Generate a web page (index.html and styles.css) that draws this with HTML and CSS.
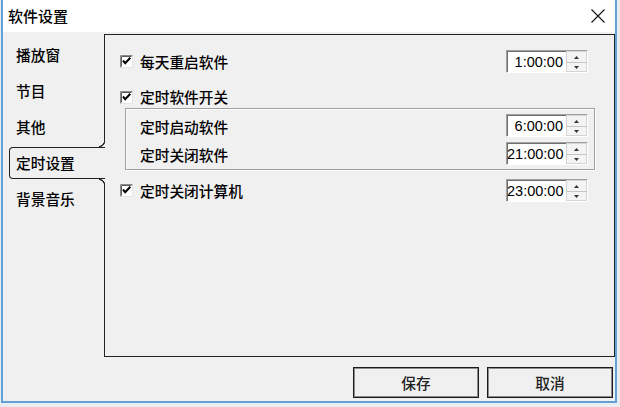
FILE: index.html
```html
<!DOCTYPE html>
<html lang="zh-CN">
<head>
<meta charset="utf-8">
<title>软件设置</title>
<link rel="stylesheet" href="styles.css">
</head>
<body>
<div class="window">
  <div class="titlebar">
    <span class="title">软件设置</span>
    <svg class="close" width="14" height="14" viewBox="0 0 14 14"><path d="M0.5 0.5L13.5 13.5M13.5 0.5L0.5 13.5" stroke="#111" stroke-width="1.1" fill="none"/></svg>
  </div>
  <div class="client">
    <div class="tabarea">
      <ul class="tabs">
        <li class="tab">播放窗</li>
        <li class="tab">节目</li>
        <li class="tab">其他</li>
        <li class="tab selected">定时设置</li>
        <li class="tab">背景音乐</li>
      </ul>
      <div class="panel">
        <div class="row">
          <label class="check">
            <svg class="cb" width="13" height="13" viewBox="0 0 13 13"><rect width="13" height="13" fill="#fff"/><path d="M12.5 0.5V12.5H0.5" stroke="#e3e3e3" fill="none"/><path d="M0.5 12.5V0.5H12.5" stroke="#8a8a8a" fill="none"/><path d="M1.5 11.5V1.5H11.5" stroke="#5a5a5a" fill="none"/><path d="M3 5.5L5.2 8.2L10.3 2.8" stroke="#000" stroke-width="2" fill="none"/></svg>
            <span>每天重启软件</span>
          </label>
          <div class="spin"><span class="spin-val">1:00:00</span><svg class="spin-btns" width="21" height="21" viewBox="0 0 21 21"><rect x="0.5" y="0.5" width="20" height="20" fill="#f4f4f4" stroke="#d4d4d4"/><line x1="0" y1="11.5" x2="21" y2="11.5" stroke="#c4c4c4"/><path d="M8 8h5l-2.5-3z" fill="#333"/><path d="M8 15h5l-2.5 3z" fill="#333"/></svg></div>
        </div>
        <div class="row row-plain">
          <label class="check">
            <svg class="cb" width="13" height="13" viewBox="0 0 13 13"><rect width="13" height="13" fill="#fff"/><path d="M12.5 0.5V12.5H0.5" stroke="#e3e3e3" fill="none"/><path d="M0.5 12.5V0.5H12.5" stroke="#8a8a8a" fill="none"/><path d="M1.5 11.5V1.5H11.5" stroke="#5a5a5a" fill="none"/><path d="M3 5.5L5.2 8.2L10.3 2.8" stroke="#000" stroke-width="2" fill="none"/></svg>
            <span>定时软件开关</span>
          </label>
        </div>
        <div class="group">
          <div class="row">
            <span class="label">定时启动软件</span>
            <div class="spin"><span class="spin-val">6:00:00</span><svg class="spin-btns" width="21" height="21" viewBox="0 0 21 21"><rect x="0.5" y="0.5" width="20" height="20" fill="#f4f4f4" stroke="#d4d4d4"/><line x1="0" y1="11.5" x2="21" y2="11.5" stroke="#c4c4c4"/><path d="M8 8h5l-2.5-3z" fill="#333"/><path d="M8 15h5l-2.5 3z" fill="#333"/></svg></div>
          </div>
          <div class="row">
            <span class="label">定时关闭软件</span>
            <div class="spin"><span class="spin-val">21:00:00</span><svg class="spin-btns" width="21" height="21" viewBox="0 0 21 21"><rect x="0.5" y="0.5" width="20" height="20" fill="#f4f4f4" stroke="#d4d4d4"/><line x1="0" y1="11.5" x2="21" y2="11.5" stroke="#c4c4c4"/><path d="M8 8h5l-2.5-3z" fill="#333"/><path d="M8 15h5l-2.5 3z" fill="#333"/></svg></div>
          </div>
        </div>
        <div class="row row-last">
          <label class="check">
            <svg class="cb" width="13" height="13" viewBox="0 0 13 13"><rect width="13" height="13" fill="#fff"/><path d="M12.5 0.5V12.5H0.5" stroke="#e3e3e3" fill="none"/><path d="M0.5 12.5V0.5H12.5" stroke="#8a8a8a" fill="none"/><path d="M1.5 11.5V1.5H11.5" stroke="#5a5a5a" fill="none"/><path d="M3 5.5L5.2 8.2L10.3 2.8" stroke="#000" stroke-width="2" fill="none"/></svg>
            <span>定时关闭计算机</span>
          </label>
          <div class="spin"><span class="spin-val">23:00:00</span><svg class="spin-btns" width="21" height="21" viewBox="0 0 21 21"><rect x="0.5" y="0.5" width="20" height="20" fill="#f4f4f4" stroke="#d4d4d4"/><line x1="0" y1="11.5" x2="21" y2="11.5" stroke="#c4c4c4"/><path d="M8 8h5l-2.5-3z" fill="#333"/><path d="M8 15h5l-2.5 3z" fill="#333"/></svg></div>
        </div>
      </div>
    </div>
    <div class="buttons">
      <button class="btn">保存</button>
      <button class="btn">取消</button>
    </div>
  </div>
</div>
</body>
</html>
```

FILE: styles.css
```css
* { box-sizing: border-box; }

body {
  margin: 0;
  background: #e9edf1;
  font-family: "Noto Sans CJK SC", "Liberation Sans", sans-serif;
  font-size: 14.7px;
  font-weight: 500;
  color: #000;
}

.window {
  margin-left: 1px;
  width: 616px;
  height: 403px;
  border: 2px solid #64a0d8;
  border-top: 0;
  display: flex;
  flex-direction: column;
  background: #f0f0f0;
}

.titlebar {
  height: 32px;
  flex: none;
  background: #fff;
  display: flex;
  align-items: center;
  justify-content: space-between;
  padding: 0 10px 0 5px;
}

.title {
  font-size: 15px;
  line-height: 20px;
}

.close { display: block; }

.client {
  flex: 1;
  display: flex;
  flex-direction: column;
  padding-top: 2px;
}

.tabarea {
  display: flex;
  height: 323px;
  flex: none;
}

.tabs {
  list-style: none;
  margin: 0;
  padding: 3px 0 0;
  width: 101px;
  flex: none;
  display: flex;
  flex-direction: column;
}

.tab {
  height: 36px;
  line-height: 36px;
  padding-left: 13px;
  white-space: nowrap;
}

.tab.selected {
  position: relative;
  z-index: 1;
  height: 32px;
  line-height: 30px;
  margin: 2px -1px 2px 6px;
  padding-left: 6px;
  border: 1px solid #222;
  border-right: 0;
  border-radius: 4px 0 0 4px;
  background: #f0f0f0;
}

.tab.selected::before,
.tab.selected::after {
  content: "";
  position: absolute;
  right: 0;
  width: 6px;
  height: 6px;
}

.tab.selected::before {
  top: -7px;
  background: radial-gradient(circle at 0 0, transparent 4.6px, #222 5.1px, #222 5.9px, #f0f0f0 6.4px);
}

.tab.selected::after {
  bottom: -7px;
  background: radial-gradient(circle at 0 100%, transparent 4.6px, #222 5.1px, #222 5.9px, #f0f0f0 6.4px);
}

.panel {
  flex: 1;
  border: 1px solid #222;
  padding: 15px 26px 0 15px;
  display: flex;
  flex-direction: column;
}

.row {
  display: flex;
  align-items: center;
  height: 23px;
  flex: none;
}

.row-plain {
  margin-top: 13px;
  height: 22px;
}

.row-last { margin-top: 9px; }

.check {
  display: flex;
  align-items: center;
  gap: 7px;
  line-height: 20px;
}

.cb { display: block; flex: none; }

.label {
  line-height: 20px;
  margin-top: 2px;
}

.group {
  margin: 0 -7px 0 5px;
  height: 62px;
  border: 1px solid #a0a0a0;
  box-shadow: inset 1px 1px 0 #fff, 1px 1px 0 #fff;
  padding: 5px 6px 4px 14px;
  display: flex;
  flex-direction: column;
  gap: 5px;
}

.spin {
  margin-left: auto;
  width: 82px;
  height: 23px;
  display: flex;
  background: #fff;
  border-top: 1px solid #a0a0a0;
  border-left: 1px solid #a0a0a0;
  border-right: 1px solid #fff;
  border-bottom: 1px solid #fff;
  box-shadow: inset 1px 1px 0 #707070;
}

.spin-val {
  flex: 1;
  text-align: right;
  padding-right: 3px;
  font-family: "Liberation Sans", Arial, sans-serif;
  font-size: 14.5px;
  font-weight: 400;
  line-height: 22px;
}

.spin-btns { display: block; flex: none; }

.buttons {
  display: flex;
  justify-content: flex-end;
  gap: 8px;
  margin-top: 10px;
  padding-right: 2px;
}

.btn {
  width: 126px;
  height: 31px;
  padding: 0;
  font-family: "Noto Sans CJK SC", sans-serif;
  font-size: 14.7px;
  font-weight: 500;
  color: #222;
  background: #f0f0f0;
  border: 1px solid #1a1a1a;
  box-shadow: inset 0 0 0 1px #8c8c8c;
}
```
